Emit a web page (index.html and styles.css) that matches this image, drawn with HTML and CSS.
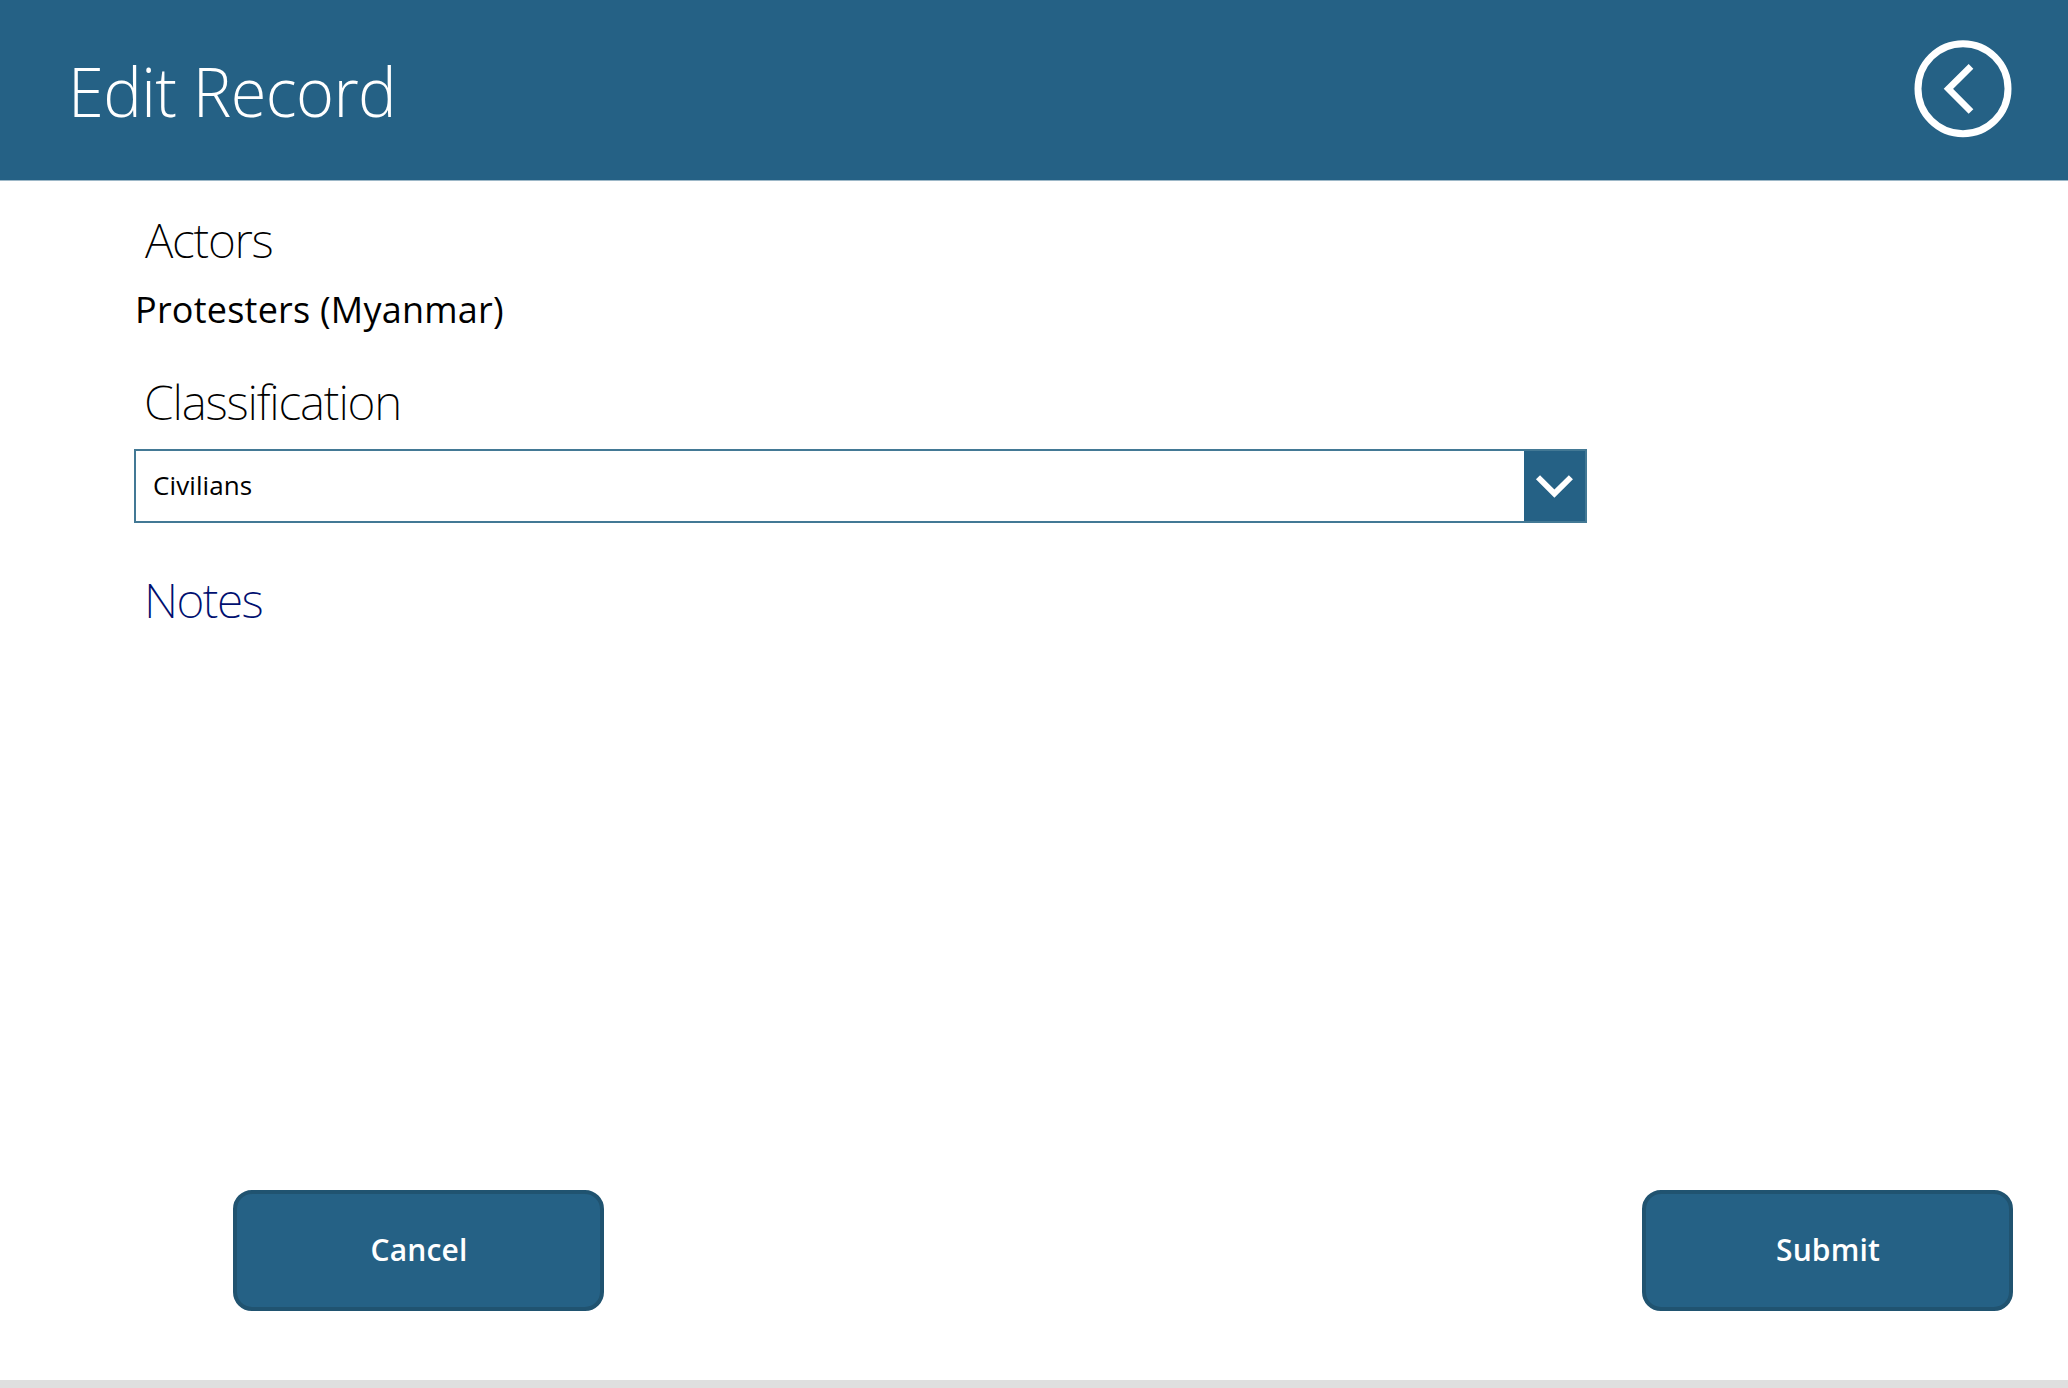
FILE: index.html
```html
<!DOCTYPE html>
<html lang="en">
<head>
<meta charset="utf-8">
<title>Edit Record</title>
<link rel="stylesheet" href="styles.css">
</head>
<body>
<div class="screen">
  <header class="header">
    <h1 class="title">Edit Record</h1>
    <button class="back" aria-label="Back">
      <svg width="98" height="98" viewBox="0 0 98 98" fill="none" stroke="#fff">
        <circle cx="49" cy="48.7" r="45" stroke-width="7"/>
        <path d="M57 26.4L34.4 48.8L57 71.5" stroke-width="6.6"/>
      </svg>
    </button>
  </header>
  <main class="form">
    <h2 class="label label-actors">Actors</h2>
    <p class="value">Protesters (Myanmar)</p>
    <h2 class="label label-class">Classification</h2>
    <div class="select">
      <span class="select-text">Civilians</span>
      <span class="select-arrow">
        <svg width="60" height="70" viewBox="0 0 60 70" fill="none" stroke="#fff">
          <path d="M14 26.2L30.4 42.6L46.9 26.2" stroke-width="5.8"/>
        </svg>
      </span>
    </div>
    <h2 class="label label-notes">Notes</h2>
  </main>
  <footer class="actions">
    <button class="button">Cancel</button>
    <button class="button">Submit</button>
  </footer>
</div>
</body>
</html>
```
FILE: styles.css
```css
* { box-sizing: border-box; }
body { margin: 0; background: #fff; font-family: "Open Sans", "Noto Sans", sans-serif; color: #000; }
h1, h2, p { margin: 0; }
button { font-family: inherit; }
.screen { height: 1388px; overflow: hidden; display: flex; flex-direction: column; border-bottom: 8px solid #dfdfdf; }
.header { height: 181px; flex: none; display: flex; justify-content: space-between; padding: 0 56px 0 68px; background: #256185; border-bottom: 1px solid #9db8c8; }
.title { font-size: 68.6px; line-height: 181px; font-weight: 300; color: #fff; letter-spacing: -0.6px; transform: scaleX(0.945); transform-origin: left; white-space: nowrap; }
.back { margin: 40px 0 0; padding: 0; width: 98px; height: 98px; border: 0; background: none; }
.back svg, .select-arrow svg { display: block; }
.form { flex: 1; padding: 27px 0 0 134px; }
.label { font-family: "Noto Sans", "Open Sans", sans-serif; font-size: 48px; line-height: 64px; font-weight: 200; padding-left: 11px; white-space: nowrap; letter-spacing: -1.3px; }
.value { margin: 14px 0 0 1px; font-size: 36px; line-height: 48px; letter-spacing: 0.23px; }
.label-class { margin-top: 36px; padding-left: 10px; letter-spacing: -1.2px; }
.select { margin-top: 15px; width: 1453px; height: 74px; display: flex; justify-content: space-between; border: 2px solid #437995; }
.select-text { padding-left: 17px; font-size: 26px; line-height: 68px; letter-spacing: 0.1px; }
.select-arrow { width: 61px; background: #256185; }
.label-notes { margin-top: 45px; padding-left: 10px; color: #000f70; letter-spacing: -1.6px; }
.actions { flex: none; display: flex; justify-content: space-between; padding: 0 55px 69px 233px; }
.button { width: 371px; height: 121px; padding: 0 0 1px 1px; border: 4px solid #205370; border-radius: 19px; background: #256185; color: #fff; font-size: 30px; font-weight: 600; line-height: 110px; letter-spacing: 0.15px; }
```
